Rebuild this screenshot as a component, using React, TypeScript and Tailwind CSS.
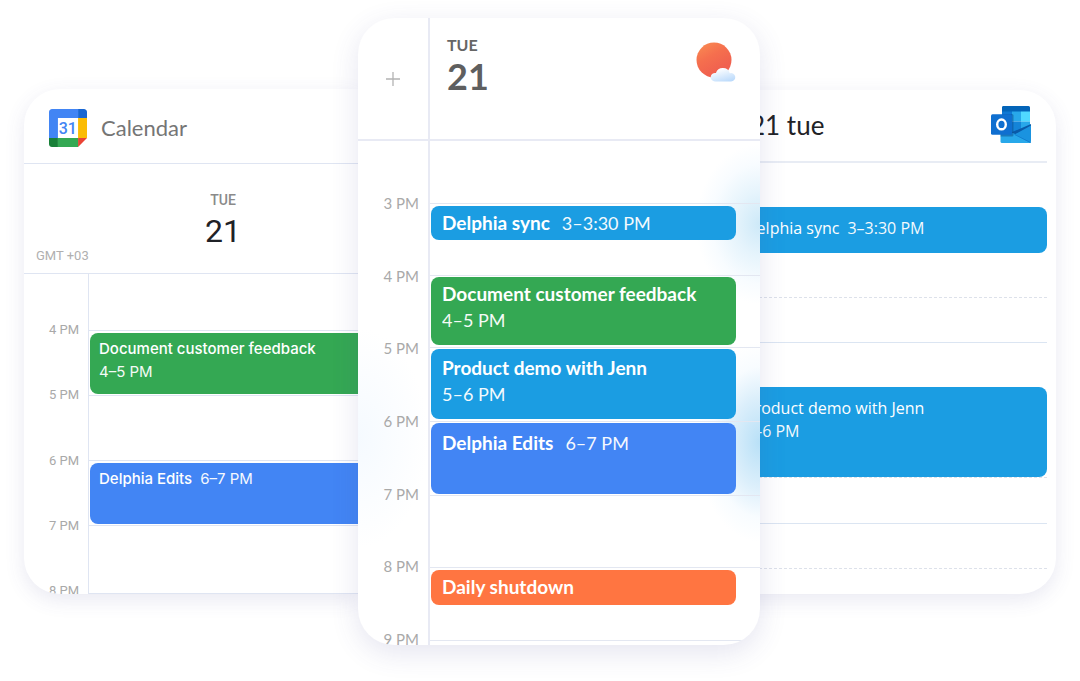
import type { ReactNode } from "react";
import clsx from "clsx";

const focusHours = ["3 PM", "4 PM", "5 PM", "6 PM", "7 PM", "8 PM", "9 PM"];
const googleHours = ["4 PM", "5 PM", "6 PM", "7 PM", "8 PM"];

function GoogleCalendarLogo() {
  return (
    <svg viewBox="0 0 200 200" className="size-[38px] shrink-0" aria-hidden="true">
      <path fill="#fff" d="M47 47h106v106H47z" />
      <path fill="#ea4335" d="M153 200l47-47h-47z" />
      <path fill="#fbbc04" d="M200 47h-47v106h47z" />
      <path fill="#34a853" d="M153 153H47v47h106z" />
      <path fill="#188038" d="M0 153v31c0 9 7 16 16 16h31v-47z" />
      <path fill="#1967d2" d="M200 47V16c0-9-7-16-16-16h-31v47z" />
      <path fill="#4285f4" d="M153 47V0H16C7 0 0 7 0 16v137h47V47z" />
      <text
        x="99"
        y="131"
        textAnchor="middle"
        fontSize="84"
        className="fill-[#4285f4] font-['Roboto',sans-serif] font-medium"
      >
        31
      </text>
    </svg>
  );
}

function OutlookLogo() {
  return (
    <svg viewBox="0 0 40 37" className="h-[37px] w-10 shrink-0" aria-hidden="true">
      <path fill="#0364b8" d="M12 0h25.500a1.500 1.500 0 0 1 1.500 1.500V6H11V1.500A1.500 1.500 0 0 1 12 0z" />
      <path fill="#0f78d4" d="M11 5.500h10V18H11z" />
      <path fill="#28a8ea" d="M21 5.500h9V15.500h-9z" />
      <path fill="#50d9ff" d="M30 5.500h9v10h-9z" />
      <path fill="#0f6cc8" d="M11 15h10v13H11z" />
      <path fill="#1484d8" d="M21 15.500h9V27h-9z" />
      <path fill="#28a8ea" d="M30 15.500h9V26h-9z" />
      <path fill="#0a5aa8" d="M20 26.500L40 18v3L24 30z" />
      <path fill="#28a8ea" d="M9.500 24L22 27l18 9.200a1.500 1.500 0 0 1-1 .8H11a1.500 1.500 0 0 1-1.500-1.500z" />
      <path fill="#1a93e0" d="M40 19.500L23.500 28.500 39 36.800a2 2 0 0 0 1-1.800z" />
      <path fill="none" stroke="#0c6fc4" strokeWidth=".6" d="M23.500 28.500L39.500 36.500" />
      <path fill="#084a8c" opacity=".5" d="M11 8h10a1.500 1.500 0 0 1 1.500 1.500V29A1.500 1.500 0 0 1 21 30.500H9.500z" />
      <rect y="8.200" width="21" height="20.500" rx="1.500" fill="#0f6fd0" />
      <ellipse cx="10.500" cy="18.400" rx="4.300" ry="4.900" fill="none" stroke="#fff" strokeWidth="2.400" />
    </svg>
  );
}

function WeatherIcon() {
  return (
    <svg viewBox="0 0 40 40" className="size-10 shrink-0" role="img" aria-label="Partly cloudy">
      <defs>
        <linearGradient id="sun" x1="0.15" y1="0" x2="0.6" y2="0.8">
          <stop offset="0" stopColor="#f98a52" />
          <stop offset="0.5" stopColor="#f56f4e" />
          <stop offset="1" stopColor="#f0614f" />
        </linearGradient>
        <linearGradient id="cloud" x1="0.3" y1="0" x2="0.8" y2="1">
          <stop offset="0.1" stopColor="#fbfdff" />
          <stop offset="1" stopColor="#b9d9fb" />
        </linearGradient>
      </defs>
      <circle cx="18" cy="18" r="17.500" fill="url(#sun)" />
      <path
        fill="url(#cloud)"
        d="M19 39.500a4.300 4.300 0 1 1 .9-8.500A7.300 7.300 0 0 1 33.800 31.300a4.200 4.200 0 1 1 1.200 8.200z"
      />
    </svg>
  );
}

type EventProps = {
  title: string;
  time?: string;
  stacked?: boolean;
  className: string;
  timeClassName?: string;
};

function EventBlock({ title, time, stacked, className, timeClassName }: EventProps) {
  return (
    <article className={className}>
      <h3 className={clsx("whitespace-nowrap", !stacked && "inline")}>{title}</h3>
      {time && (
        <p className={clsx("font-normal whitespace-nowrap opacity-95", !stacked && "inline", timeClassName)}>{time}</p>
      )}
    </article>
  );
}

function HourLabels({ hours, className }: { hours: string[]; className: string }) {
  return (
    <ul className={clsx("flex flex-col justify-between text-right leading-5 text-[#a9a9a9]", className)}>
      {hours.map((hour) => (
        <li key={hour}>{hour}</li>
      ))}
    </ul>
  );
}

function Slot({ className, children }: { className: string; children?: ReactNode }) {
  return <div className={className}>{children}</div>;
}

function GoogleCard() {
  return (
    <section className="mt-[71px] flex flex-col self-start overflow-hidden rounded-l-[36px] bg-white font-['Roboto',sans-serif] shadow-[0_6px_20px_rgba(70,70,150,0.12)]">
      <header className="flex h-[75px] items-center gap-[14px] border-b border-[#dfe5f2] pt-1 pl-[25px]">
        <GoogleCalendarLogo />
        <h2 className="font-['Lato',sans-serif] text-[22px] leading-7 text-[#757575]">Calendar</h2>
      </header>
      <div className="flex h-[110px] items-end border-b border-[#dfe5f2] pb-[7px]">
        <p className="w-16 pl-3 text-[13px] leading-5 whitespace-nowrap text-[#b0b0b0]">GMT +03</p>
        <div className="flex grow flex-col items-center pb-[14px] text-center">
          <p className="text-sm leading-5 font-medium text-[#8a8a8a]">TUE</p>
          <p className="text-[32px] leading-[42px] text-[#1f2126]">21</p>
        </div>
      </div>
      <div className="flex">
        <HourLabels hours={googleHours} className="-mb-[7px] w-[65px] border-r border-[#dfe5f2] pt-[46px] pr-[9px] text-[13px]" />
        <div className="grow font-['Inter',sans-serif] text-[15px] leading-[23px] font-medium text-white">
          <Slot className="h-14" />
          <Slot className="h-[65px] border-t border-[#dfe5f2] pt-0.5 pl-px">
            <EventBlock
              title="Document customer feedback"
              time="4–5 PM"
              stacked
              className="h-[61px] rounded-l-lg bg-[#34a853] pt-1 pl-[9px]"
            />
          </Slot>
          <Slot className="h-[65px] border-t border-[#dfe5f2]" />
          <Slot className="h-[65px] border-t border-[#dfe5f2] pt-0.5 pl-px">
            <EventBlock
              title="Delphia Edits"
              time="6–7 PM"
              className="h-[61px] rounded-l-lg bg-[#4285f4] pt-1 pl-[9px]"
              timeClassName="ml-2"
            />
          </Slot>
          <Slot className="h-[69px] border-y border-[#dfe5f2]" />
        </div>
      </div>
    </section>
  );
}

function FocusCard() {
  return (
    <section className="relative z-10 flex flex-col overflow-hidden rounded-[36px] bg-white bg-[radial-gradient(64px_80px_at_100%_206px,#cde9f8_0%,#e6f4fc_40%,#f8fcff_75%,transparent_100%),radial-gradient(64px_100px_at_100%_424px,#b8e0f7_0%,#dceffb_45%,#f8fcff_75%,transparent_100%),radial-gradient(70px_110px_at_0%_420px,#f5faff_0%,transparent_100%)] font-['Lato',sans-serif] shadow-[0_8px_28px_rgba(70,70,150,0.14)]">
      <header className="flex h-[123px] border-b-2 border-[#e8eaf4]">
        <div className="flex w-[72px] items-center justify-center border-r-2 border-[#e8eaf4]">
          <button type="button" aria-label="Add event" className="flex size-6 items-center justify-center">
            <svg viewBox="0 0 14 14" className="size-[14px]" aria-hidden="true">
              <path d="M7 0v14M0 7h14" stroke="#b3b3b3" strokeWidth="1.300" />
            </svg>
          </button>
        </div>
        <div className="flex grow items-start justify-between pt-[17px] pr-6 pl-[17px]">
          <div>
            <p className="text-base leading-5 font-bold text-[#666]">TUE</p>
            <p className="text-[36px] leading-[42px] font-bold text-[#5f5f5f]">21</p>
          </div>
          <div className="pt-[7px]">
            <WeatherIcon />
          </div>
        </div>
      </header>
      <div className="flex">
        <HourLabels hours={focusHours} className="-mb-1 w-[72px] border-r-2 border-[#e8eaf4] pt-[52px] pr-[9px] text-[15px]" />
        <div className="grow text-[19px] leading-[26px] font-bold text-white">
          <Slot className="h-[62px]" />
          <Slot className="h-[72px] border-t border-[#e3e7f1] pt-0.5 pr-6 pl-px">
            <EventBlock
              title="Delphia sync"
              time="3–3:30 PM"
              className="h-[34px] rounded-lg bg-[#1b9de2] pt-1 pl-[11px]"
              timeClassName="ml-3 text-lg leading-[26px]"
            />
          </Slot>
          <Slot className="h-[72px] border-t border-[#e3e7f1] pt-px pr-6 pl-px">
            <EventBlock
              title="Document customer feedback"
              time="4–5 PM"
              stacked
              className="h-[68px] rounded-lg bg-[#34a853] pt-1 pl-[11px]"
              timeClassName="text-lg leading-[26px]"
            />
          </Slot>
          <Slot className="h-[74px] border-t border-[#e3e7f1] pt-px pr-6 pl-px">
            <EventBlock
              title="Product demo with Jenn"
              time="5–6 PM"
              stacked
              className="h-[70px] rounded-lg bg-[#1b9de2] pt-1.5 pl-[11px]"
              timeClassName="text-lg leading-[26px]"
            />
          </Slot>
          <Slot className="h-[74px] border-t border-[#e3e7f1] pt-px pr-6 pl-px">
            <EventBlock
              title="Delphia Edits"
              time="6–7 PM"
              className="h-[71px] rounded-lg bg-[#4285f4] pt-[7px] pl-[11px]"
              timeClassName="ml-3 text-lg leading-[26px]"
            />
          </Slot>
          <Slot className="h-[72px] border-t border-[#e3e7f1]" />
          <Slot className="h-[73px] border-t border-[#e3e7f1] pt-0.5 pr-6 pl-px">
            <EventBlock title="Daily shutdown" className="h-[35px] rounded-lg bg-[#ff7541] pt-1 pl-[11px]" />
          </Slot>
          <Slot className="h-[5px] border-t border-[#e3e7f1]" />
        </div>
      </div>
    </section>
  );
}

function OutlookCard() {
  return (
    <section className="mt-[72px] -ml-9 self-start overflow-hidden rounded-r-[36px] bg-white pr-[9px] font-['Open_Sans',sans-serif] shadow-[0_6px_20px_rgba(70,70,150,0.12)]">
      <header className="flex h-[73px] items-center justify-between border-b-2 border-[#e8ecf4] pr-4 pb-0.5 pl-[26px]">
        <h2 className="font-['Lato',sans-serif] text-[26px] leading-8 whitespace-nowrap text-[#212226]">21 tue</h2>
        <OutlookLogo />
      </header>
      <div className="text-base leading-[23px] font-normal text-white">
        <Slot className="h-11" />
        <EventBlock
          title="Delphia sync"
          time="3–3:30 PM"
          className="h-[46px] rounded-r-lg bg-[#1b9de2] pt-2.5 pl-[21px]"
          timeClassName="ml-2"
        />
        <Slot className="h-11" />
        <Slot className="h-[45px] border-t border-dashed border-[#dde1ea]" />
        <Slot className="h-[45px] border-t border-[#dbe5f2]" />
        <EventBlock
          title="Product demo with Jenn"
          time="5–6 PM"
          stacked
          className="h-[90px] rounded-r-lg bg-[#1b9de2] pt-2.5 pl-[21px]"
        />
        <Slot className="h-[46px] border-t border-dashed border-[#dde1ea]" />
        <Slot className="h-[45px] border-t border-[#dbe5f2]" />
        <Slot className="h-[26px] border-t border-dashed border-[#dde1ea]" />
      </div>
    </section>
  );
}

export default function App() {
  return (
    <main className="min-h-screen overflow-hidden bg-white px-6 pt-[18px] pb-9">
      <div className="grid grid-cols-[334fr_402fr_296fr]">
        <GoogleCard />
        <FocusCard />
        <OutlookCard />
      </div>
    </main>
  );
}
